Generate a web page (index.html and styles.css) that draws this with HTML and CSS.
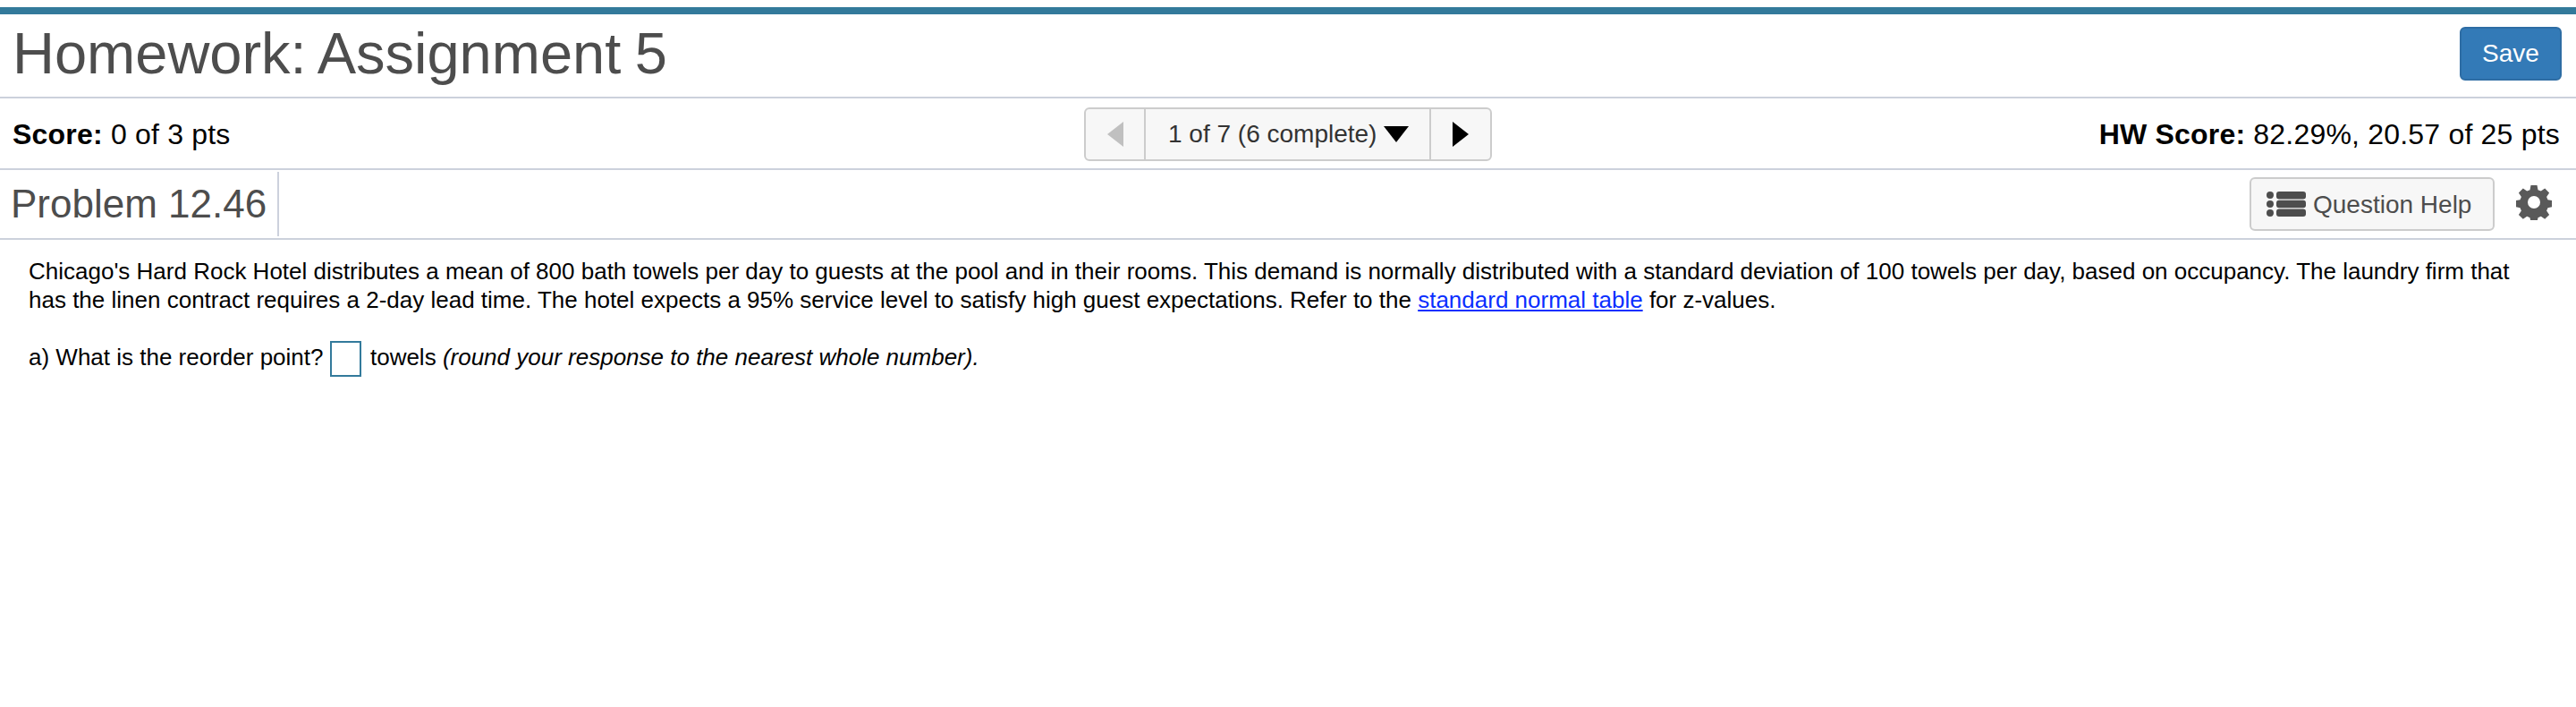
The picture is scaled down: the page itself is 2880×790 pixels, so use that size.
FILE: index.html
```html
<!DOCTYPE html>
<html lang="en">
<head>
<meta charset="utf-8">
<title>Homework: Assignment 5</title>
<link rel="stylesheet" href="styles.css">
</head>
<body>
<div class="page">
  <header class="title-row">
    <h1 class="title">Homework: Assignment 5</h1>
    <button class="save" type="button">Save</button>
  </header>
  <div class="score-row">
    <div class="score"><b>Score:</b> 0 of 3 pts</div>
    <div class="nav">
      <span class="nav-btn nav-prev"><i class="tri-left"></i></span>
      <span class="nav-mid">1 of 7 (6 complete)<i class="tri-down"></i></span>
      <span class="nav-btn nav-next"><i class="tri-right"></i></span>
    </div>
    <div class="hw-score"><b>HW Score:</b> 82.29%, 20.57 of 25 pts</div>
  </div>
  <div class="problem-row">
    <h2 class="problem">Problem 12.46</h2>
    <div class="tools">
      <button class="help" type="button">
        <svg class="list-icon" width="44" height="28" viewBox="0 0 44 28" aria-hidden="true">
          <circle cx="4" cy="4" r="4"/><circle cx="4" cy="14" r="4"/><circle cx="4" cy="24" r="4"/>
          <rect x="11" y="0" width="33" height="8.500" rx="3"/><rect x="11" y="9.750" width="33" height="8.500" rx="3"/><rect x="11" y="19.500" width="33" height="8.500" rx="3"/>
        </svg>
        Question Help
      </button>
      <svg class="gear" width="40" height="40" viewBox="0 0 40 40" aria-hidden="true">
        <path fill-rule="evenodd" d="M16.500 1h7l1 5.200 3.300 1.400 4.400-3 4.900 4.900-3 4.400 1.400 3.300 5.200 1v7l-5.200 1-1.400 3.300 3 4.400-4.900 4.900-4.400-3-3.300 1.400-1 5.200h-7l-1-5.200-3.300-1.400-4.400 3-4.900-4.900 3-4.400-1.400-3.300-5.200-1v-7l5.200-1 1.400-3.300-3-4.400 4.900-4.900 4.400 3 3.300-1.400zM20 13a7 7 0 1 0 0 14 7 7 0 0 0 0-14z"/>
      </svg>
    </div>
  </div>
  <main class="content">
    <p class="statement">Chicago's Hard Rock Hotel distributes a mean of 800 bath towels per day to guests at the pool and in their rooms. This demand is normally distributed with a standard deviation of 100 towels per day, based on occupancy. The laundry firm that has the linen contract requires a 2-day lead time. The hotel expects a 95% service level to satisfy high guest expectations. Refer to the <a href="#">standard normal table</a> for z-values.</p>
    <p class="question">a) What is the reorder point? <span class="answer"></span> towels <em>(round your response to the nearest whole number).</em></p>
  </main>
</div>
</body>
</html>
```

FILE: styles.css
```css
* { box-sizing: border-box; }
html, body { margin: 0; background: #fff; }
body { font-family: "Liberation Sans", Arial, sans-serif; color: #000; }
.page { padding-top: 8px; }
.title-row {
  border-top: 8px solid #337a9b;
  border-bottom: 2px solid #ccd1dc;
  height: 102px;
  display: flex;
  justify-content: space-between;
  align-items: center;
  padding: 0 16px 4px 14px;
}
.title { margin: 0; font-size: 65px; word-spacing: -2.500px; font-weight: 400; line-height: 72px; color: #4d4d4d; }
.save {
  width: 114px; height: 60px;
  background: #337ab7; color: #fff;
  border: 2px solid #2e6da4; border-radius: 6px;
  font: 28px "Liberation Sans", Arial, sans-serif;
  padding: 0;
}
.score-row {
  height: 80px;
  border-bottom: 2px solid #ccd1dc;
  display: grid;
  grid-template-columns: 1fr auto 1fr;
  align-items: center;
  padding: 2px 14px 0;
  font-size: 32px;
  letter-spacing: .2px;
}
.hw-score { text-align: right; padding-right: 4px; }
.nav {
  display: flex; height: 60px;
  background: #f7f7f7;
  border: 2px solid #ccc; border-radius: 6px;
  font-size: 28px; color: #333;
  letter-spacing: 0;
}
.nav-btn { display: flex; align-items: center; justify-content: center; }
.nav-prev { width: 67px; border-right: 2px solid #ccc; }
.nav-next { width: 68px; border-left: 2px solid #ccc; }
.nav-mid { display: flex; align-items: center; gap: 8px; width: 317px; padding-left: 25px; }
.tri-left { border: solid transparent; border-width: 14px 18px 14px 0; border-right-color: #c0c0c0; }
.tri-right { border: solid transparent; border-width: 14px 0 14px 18px; border-left-color: #000; }
.tri-down { border: solid transparent; border-width: 18px 14px 0; border-top-color: #000; }
.problem-row {
  height: 78px;
  border-bottom: 2px solid #ccd1dc;
  display: flex;
  justify-content: space-between;
  align-items: stretch;
  padding: 2px 0 2px 12px;
}
.problem {
  margin: 0; padding-right: 12px;
  border-right: 2px solid #ccd1dc;
  font-size: 44px; font-weight: 400; line-height: 72px; color: #4d4d4d;
}
.tools { display: flex; align-items: flex-start; padding: 6px 27px 0 0; gap: 24px; }
.help {
  display: flex; align-items: center; gap: 8px;
  width: 274px; height: 60px; padding: 2px 0 0 17px;
  background: #f7f7f7; color: #4d4d4d;
  border: 2px solid #ccc; border-radius: 6px;
  font: 28px "Liberation Sans", Arial, sans-serif;
}
.list-icon { fill: #4d4d4d; flex: none; margin-top: -2px; }
.gear { fill: #595959; margin-top: 8px; }
.content { padding: 19px 32px 0; font-size: 26px; line-height: 32px; }
.statement { margin: 0; }
.statement a { color: #0a2eff; text-decoration: underline; }
.question { margin: 30px 0 0; display: block; }
.answer {
  display: inline-block; width: 35px; height: 40px;
  border: 2px solid #337a9b;
  margin-right: 3px;
  vertical-align: middle;
}
```
